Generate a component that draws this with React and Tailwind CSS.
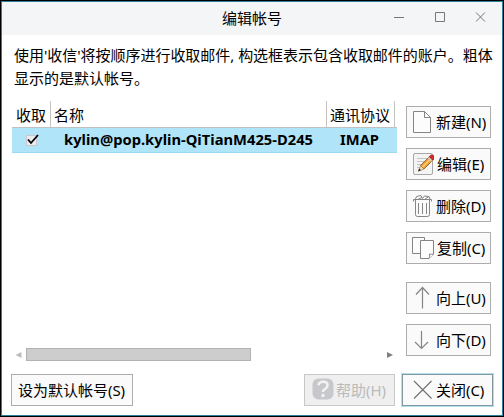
import React from 'react';

const Btn = ({ icon, label, k, className = '', shift = '' }) => (
  <button className={`flex h-8 shrink-0 items-center border border-[#adadad] bg-[#fafafa] whitespace-nowrap ${className}`}>
    {icon}
    <span className={`leading-[20px] ${shift}`}>
      {label}<span className="tracking-[-0.1px]">({k})</span>
    </span>
  </button>
);

const Svg = ({ children, className = '' }) => (
  <svg width="22" height="24" viewBox="0 0 22 24" fill="none" stroke="#858585" strokeWidth="1" className={`shrink-0 ${className}`}>
    {children}
  </svg>
);

const NewIcon = () => (
  <Svg className="ml-[5px]">
    <path d="M1.5 1.5H12.5L18.5 7.5V22.5H1.5Z" fill="#fcfcfc" />
    <path d="M12.5 1.5V7.5H18.5" />
  </Svg>
);

const EditIcon = () => (
  <Svg className="ml-[5px]">
    <rect x="1.5" y="1.5" width="19" height="21" rx="1.5" fill="#f4f4f4" stroke="#a8a8a8" />
    <path d="M5 6.5H15M5 9.5H13M5 12.5H10M5 15.5H8" stroke="#c3c3c3" />
    <path d="M8.5 13.5L17.5 4.5L21 8L12 17Z" fill="#f0a030" stroke="#7c5424" strokeWidth=".8" />
    <path d="M10.5 15L19 6.5" stroke="#ffd080" strokeWidth="1.3" />
    <path d="M6.5 19L8.5 13.5L12 17Z" fill="#f1dcb6" stroke="#8c6a42" strokeWidth=".6" />
    <path d="M6 19.5L7.2 16.5L9 18.3Z" fill="#222" stroke="none" />
    <path d="M15.8 6.2L17.3 4.7L20.8 8.2L19.3 9.7Z" fill="#c8ccd0" stroke="none" />
    <path d="M17.3 4.7L19 3Q21 2.6 22 4Q23 5.5 22 7L20.8 8.2Z" fill="#d92a2a" stroke="#9f1d1d" strokeWidth=".7" />
  </Svg>
);

const TrashIcon = () => (
  <Svg className="ml-[5px]">
    <path d="M1.5 7.5V5.5H19.5V7.5M3.5 6V20.5Q3.5 22.5 5.5 22.5H15.5Q17.5 22.5 17.5 20.5V6" />
    <path d="M6.5 9V20M10.5 9V20M14.5 9V20" />
    <path d="M3.5 5L4.5 2.5L9 1.5L10.5 4.5M6.5 5L10 3.5M10.5 4.5L12.5 2L17 2.5L18 5M13 5L17 2.5" />
  </Svg>
);

const CopyIcon = () => (
  <svg width="24" height="24" viewBox="0 0 24 24" fill="#fcfcfc" stroke="#858585" className="ml-[5px] shrink-0">
    <path d="M.5 1.5H12.5V17.5H.5Z" />
    <path d="M8.5 4.5H21.5V18L17 22.5H8.5Z" />
    <path d="M17 22.5Q18 20 17.5 18Q19.5 18.5 21.5 18" />
  </svg>
);

const UpIcon = () => (
  <Svg className="ml-[5px]">
    <path d="M10.5 22.5V1.5M4 8.5L10.5 1.5L17 8.5" strokeWidth="1.2" />
  </Svg>
);

const DownIcon = () => (
  <Svg className="ml-[4px]">
    <path d="M10.5 3V20.5M4 14L10.5 20.5L17 14" strokeWidth="1.2" />
  </Svg>
);

export default function App() {
  return (
    <div className="flex h-[417px] w-[504px] flex-col overflow-hidden border border-black bg-white font-['Noto_Sans','Noto_Sans_CJK_SC',sans-serif] text-[15px] text-black">
      <div className="flex h-full flex-col border border-[#2b7f98]">
        <header className="flex h-[33px] shrink-0 items-center bg-[#f4f5f7]">
          <span className="mb-[2px] ml-[220px] w-[60px] whitespace-nowrap leading-[20px]">编辑帐号</span>
          <svg width="94" height="12" viewBox="0 0 94 12" fill="none" stroke="#777" className="ml-[111px] mb-[3px]">
            <path d="M1 6.5H11M42.5 1.5H51.5V10.5H42.5Z" />
            <path d="M83 1.5L92 10.5M92 1.5L83 10.5" />
          </svg>
        </header>

        <p className="mt-[9px] ml-3 h-[46px] shrink-0 whitespace-nowrap leading-[23px]">
          <span className="block tracking-[-0.03px]">使用'收信'将按顺序进行收取邮件, 构选框表示包含收取邮件的账户。粗体</span>
          <span className="block">显示的是默认帐号。</span>
        </p>

        <div className="mt-[11px] flex h-[262px] shrink-0">
          <div className="ml-[10px] flex w-[385px] flex-col">
            <div className="flex h-[26px] shrink-0 leading-[28px]">
              <div className="w-[39px] border-r border-[#c4c4c4] pl-1">收取</div>
              <div className="w-[276px] border-r border-[#c4c4c4] pl-[3px]">名称</div>
              <div className="w-[68px] border-r border-[#c4c4c4] pl-[3px]">通讯协议</div>
            </div>
            <div className="flex h-[26px] shrink-0 items-center border-t border-b border-t-[#c0c0c0] border-b-[#9bd9f0] bg-[#b0e5f9] font-bold">
              <svg width="14" height="12" viewBox="0 0 14 12" fill="none" className="ml-[14px]">
                <rect x=".5" y="1.5" width="10" height="10" fill="#ebebf0" stroke="#c9c9cc" />
                <path d="M2 5.5L5 9L12 1" stroke="#000" strokeWidth="1.8" />
              </svg>
              <svg width="249" height="20" className="ml-[24px] overflow-visible">
                <text x="0" y="15" textLength="249" lengthAdjust="spacingAndGlyphs">kylin@pop.kylin-QiTianM425-D245</text>
              </svg>
              <svg width="39" height="20" className="ml-[27px] overflow-visible">
                <text x="0" y="15" textLength="39" lengthAdjust="spacingAndGlyphs">IMAP</text>
              </svg>
            </div>
            <div className="mt-auto mb-[2px] flex h-[13px] items-center">
              <svg width="14" height="8" viewBox="0 0 14 8" fill="#bdbdbd"><path d="M3.5 4L9.5 1V7Z" /></svg>
              <div className="h-[13px] w-[225px] border border-[#b2b2b2] bg-[#cdcdcd]" />
              <svg width="10" height="8" viewBox="0 0 10 8" fill="#808080" className="ml-auto mr-[1px]"><path d="M1 1L7 4L1 7Z" /></svg>
            </div>
          </div>

          <aside className="ml-[9px] flex w-[85px] flex-col gap-[10px] pt-[5px]">
            <Btn icon={<NewIcon />} label="新建" k="N" shift="ml-[2px]" />
            <Btn icon={<EditIcon />} label="编辑" k="E" shift="ml-[3px]" />
            <Btn icon={<TrashIcon />} label="删除" k="D" shift="ml-[2px]" />
            <Btn icon={<CopyIcon />} label="复制" k="C" shift="ml-[1px]" />
            <Btn icon={<UpIcon />} label="向上" k="U" shift="ml-[2px]" className="mt-2" />
            <Btn icon={<DownIcon />} label="向下" k="D" shift="ml-[3px]" />
          </aside>
        </div>

        <footer className="mt-[10px] flex h-[34px] items-center pl-[9px]">
          <Btn label="设为默认帐号" k="S" className="w-[122px] pl-[6px]" />
          <button disabled className="ml-[171px] flex h-8 w-[91px] items-center border border-[#c8c8c8] bg-[#efefef] whitespace-nowrap text-[#bababa]">
            <svg width="22" height="22" viewBox="0 0 22 22" className="mb-[2px] ml-[7px] shrink-0">
              <rect x=".5" y=".5" width="21" height="21" rx="6" fill="#c7c8cb" />
              <path d="M6.5 7.2Q7 3.8 11.2 3.8Q15.5 3.8 15.5 7.5Q15.5 9.5 13 11Q11 12.3 11 14" fill="none" stroke="#f2f2f2" strokeWidth="2.6" />
              <circle cx="11" cy="17.5" r="1.7" fill="#f2f2f2" />
            </svg>
            <span className="ml-[2px] leading-[20px]">帮助<span className="tracking-[-0.1px]">(H)</span></span>
          </button>
          <button className="ml-[6px] flex h-[34px] w-[93px] items-center border border-[#b2dfee] bg-[#fafafa] whitespace-nowrap">
            <span className="flex h-8 w-[91px] items-center border border-[#8198a1]">
              <svg width="20" height="20" viewBox="0 0 20 20" fill="none" stroke="#707070" strokeWidth="1.1" className="ml-[10px] shrink-0">
                <path d="M1 1L18.5 18.5M18.5 1L1 18.5" />
              </svg>
              <span className="ml-[3px] leading-[20px]">关闭<span className="tracking-[-0.1px]">(C)</span></span>
            </span>
          </button>
        </footer>
      </div>
    </div>
  );
}
